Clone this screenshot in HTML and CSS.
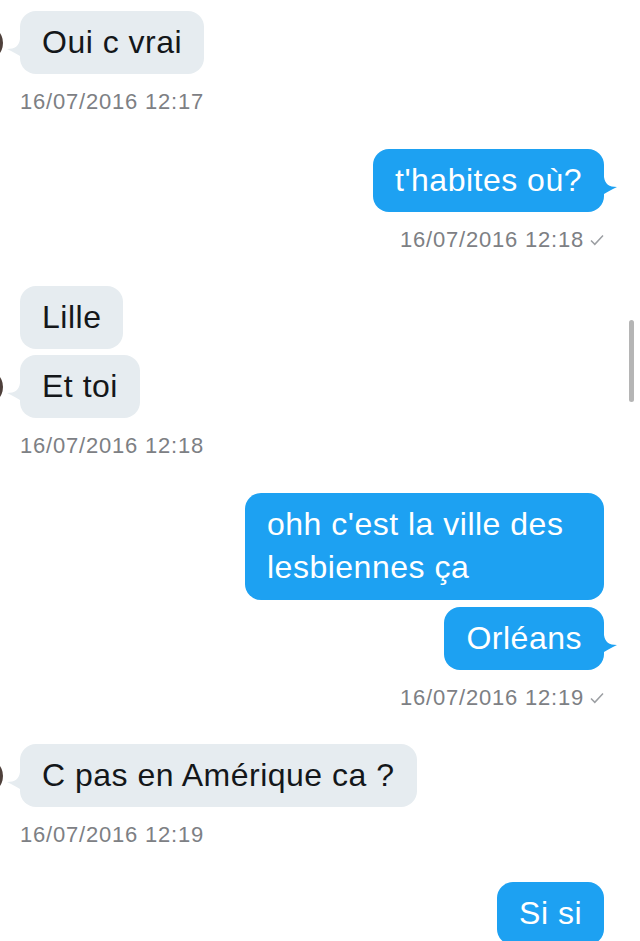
FILE: index.html
```html
<!doctype html>
<html lang="fr">
<head>
    <meta charset="UTF-8">
    <meta name="viewport" content="width=device-width, initial-scale=1.0">
    <title>Messages</title>
    <link rel="stylesheet" href="styles.css">
</head>
<body>
<div class="conversation">
    <div class="scrollbar"></div>

    <section class="thread">

        <div class="group in">
            <div class="row">
                <span class="avatar"></span>
                <div class="bubble">Oui c vrai
                    <svg class="tail" width="14" height="18" viewBox="0 0 14 18"><path d="M0 0 L1 0 C2 7 6 10 14 10 C9 12 5 15 1 17 L0 17 Z"/></svg>
                </div>
            </div>
            <div class="stamp">16/07/2016 12:17</div>
        </div>

        <div class="group out">
            <div class="row">
                <div class="bubble">t'habites où?
                    <svg class="tail" width="14" height="18" viewBox="0 0 14 18"><path d="M0 0 L1 0 C2 7 6 10 14 10 C9 12 5 15 1 17 L0 17 Z"/></svg>
                </div>
            </div>
            <div class="stamp">16/07/2016 12:18
                <svg class="check" width="14" height="12" viewBox="0 0 14 12"><path d="M1 6.5 L4.8 10.3 L13 1.5"/></svg>
            </div>
        </div>

        <div class="group in">
            <div class="row">
                <span class="avatar empty"></span>
                <div class="bubble">Lille</div>
            </div>
            <div class="row">
                <span class="avatar"></span>
                <div class="bubble">Et toi
                    <svg class="tail" width="14" height="18" viewBox="0 0 14 18"><path d="M0 0 L1 0 C2 7 6 10 14 10 C9 12 5 15 1 17 L0 17 Z"/></svg>
                </div>
            </div>
            <div class="stamp">16/07/2016 12:18</div>
        </div>

        <div class="group out">
            <div class="row">
                <div class="bubble wide">ohh c'est la ville des lesbiennes ça</div>
            </div>
            <div class="row">
                <div class="bubble">Orléans
                    <svg class="tail" width="14" height="18" viewBox="0 0 14 18"><path d="M0 0 L1 0 C2 7 6 10 14 10 C9 12 5 15 1 17 L0 17 Z"/></svg>
                </div>
            </div>
            <div class="stamp">16/07/2016 12:19
                <svg class="check" width="14" height="12" viewBox="0 0 14 12"><path d="M1 6.5 L4.8 10.3 L13 1.5"/></svg>
            </div>
        </div>

        <div class="group in">
            <div class="row">
                <span class="avatar"></span>
                <div class="bubble">C pas en Amérique ca ?
                    <svg class="tail" width="14" height="18" viewBox="0 0 14 18"><path d="M0 0 L1 0 C2 7 6 10 14 10 C9 12 5 15 1 17 L0 17 Z"/></svg>
                </div>
            </div>
            <div class="stamp">16/07/2016 12:19</div>
        </div>

        <div class="group out">
            <div class="row">
                <div class="bubble">Si si</div>
            </div>
        </div>

    </section>
</div>
</body>
</html>
```

FILE: styles.css
```css
html, body {
    margin: 0;
    padding: 0;
    background: #fff;
}

body {
    font-family: "Liberation Sans", Arial, sans-serif;
    width: 640px;
    height: 941px;
    overflow: hidden;
}

.conversation {
    position: relative;
    height: 941px;
    overflow: hidden;
}

.scrollbar {
    position: absolute;
    top: 320px;
    right: 6px;
    width: 5px;
    height: 82px;
    border-radius: 3px;
    background: #b5b5b5;
}

.thread {
    display: flex;
    flex-direction: column;
    padding: 11px 36px 0 20px;
}

.group {
    display: flex;
    flex-direction: column;
    gap: 6px;
    margin-bottom: 33px;
}

.group.in {
    align-items: flex-start;
}

.group.out {
    align-items: flex-end;
    gap: 7px;
    margin-bottom: 32px;
}

.row {
    display: flex;
    align-items: center;
}

.group.in .row {
    margin-left: -53px;
}

.avatar {
    width: 36px;
    height: 36px;
    margin-right: 17px;
    border-radius: 50%;
    background: #4e403b;
    flex: none;
}

.avatar.empty {
    visibility: hidden;
}

.bubble {
    position: relative;
    padding: 10px 22px;
    border-radius: 16px;
    font-size: 32px;
    line-height: 43px;
    letter-spacing: 0.5px;
    white-space: nowrap;
}

.bubble.wide {
    white-space: normal;
    width: 315px;
    padding-bottom: 11px;
}

.in .bubble {
    background: #e6ecf0;
    color: #14171a;
}

.out .bubble {
    background: #1da1f2;
    color: #fff;
}

.tail {
    position: absolute;
    top: calc(50% - 4px);
}

.in .tail {
    left: -13px;
    transform: scaleX(-1);
    fill: #e6ecf0;
}

.out .tail {
    right: -13px;
    fill: #1da1f2;
}

.stamp {
    display: flex;
    align-items: center;
    margin-top: 8px;
    font-size: 22px;
    line-height: 28px;
    letter-spacing: 0.8px;
    color: #7d8084;
}

.group.out .stamp {
    margin-top: 7px;
}

.check {
    margin-left: 6px;
    fill: none;
    stroke: #9c9fa3;
    stroke-width: 1.5;
}
```
